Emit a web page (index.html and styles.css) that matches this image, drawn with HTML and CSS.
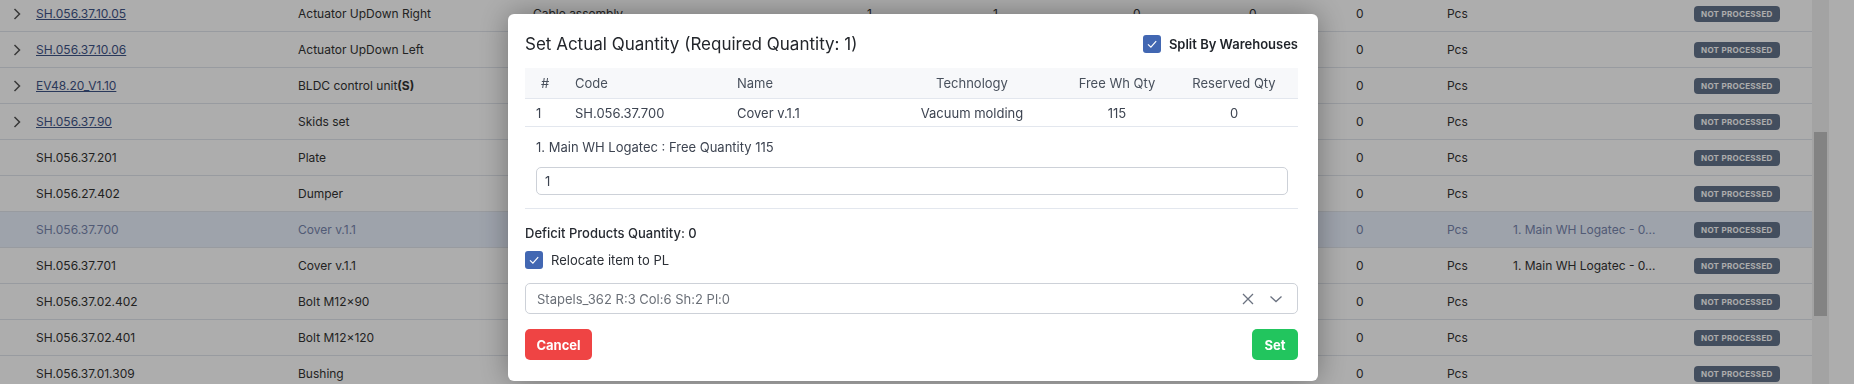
FILE: index.html
```html
<!DOCTYPE html>
<html lang="en">

<head>
    <meta charset="UTF-8">
    <meta name="viewport" content="width=device-width, initial-scale=1.0">
    <title>Production Items</title>
    <link rel="stylesheet" href="styles.css">
</head>

<body>

    <div class="page">
        <div class="grid">
            <div class="row">
                <span class="toggle"><svg width="8" height="12" viewBox="0 0 8 12"><path d="M1.5 1 L6.5 6 L1.5 11" /></svg></span>
                <span><a class="code" href="#">SH.056.37.10.05</a></span>
                <span>Actuator UpDown Right</span>
                <span>Cable assembly</span>
                <span>1</span><span>1</span><span>0</span><span>0</span><span>0</span>
                <span>Pcs</span><span></span>
                <span><i class="badge">NOT PROCESSED</i></span>
            </div>
            <!-- колонки под модалкой не заполнены -->
            <div class="row">
                <span class="toggle"><svg width="8" height="12" viewBox="0 0 8 12"><path d="M1.5 1 L6.5 6 L1.5 11" /></svg></span>
                <span><a class="code" href="#">SH.056.37.10.06</a></span>
                <span>Actuator UpDown Left</span>
                <span></span><span></span><span></span><span></span><span></span>
                <span>0</span><span>Pcs</span><span></span>
                <span><i class="badge">NOT PROCESSED</i></span>
            </div>
            <div class="row">
                <span class="toggle"><svg width="8" height="12" viewBox="0 0 8 12"><path d="M1.5 1 L6.5 6 L1.5 11" /></svg></span>
                <span><a class="code" href="#">EV48.20_V1.10</a></span>
                <span>BLDC control unit<b>(S)</b></span>
                <span></span><span></span><span></span><span></span><span></span>
                <span>0</span><span>Pcs</span><span></span>
                <span><i class="badge">NOT PROCESSED</i></span>
            </div>
            <div class="row">
                <span class="toggle"><svg width="8" height="12" viewBox="0 0 8 12"><path d="M1.5 1 L6.5 6 L1.5 11" /></svg></span>
                <span><a class="code" href="#">SH.056.37.90</a></span>
                <span>Skids set</span>
                <span></span><span></span><span></span><span></span><span></span>
                <span>0</span><span>Pcs</span><span></span>
                <span><i class="badge">NOT PROCESSED</i></span>
            </div>
            <div class="row">
                <span class="toggle"></span>
                <span>SH.056.37.201</span>
                <span>Plate</span>
                <span></span><span></span><span></span><span></span><span></span>
                <span>0</span><span>Pcs</span><span></span>
                <span><i class="badge">NOT PROCESSED</i></span>
            </div>
            <div class="row">
                <span class="toggle"></span>
                <span>SH.056.27.402</span>
                <span>Dumper</span>
                <span></span><span></span><span></span><span></span><span></span>
                <span>0</span><span>Pcs</span><span></span>
                <span><i class="badge">NOT PROCESSED</i></span>
            </div>
            <!-- выбранная строка -->
            <div class="row selected">
                <span class="toggle"></span>
                <span>SH.056.37.700</span>
                <span>Cover v.1.1</span>
                <span></span><span></span><span></span><span></span><span></span>
                <span>0</span><span>Pcs</span><span>1. Main WH Logatec - 0...</span>
                <span><i class="badge">NOT PROCESSED</i></span>
            </div>
            <div class="row">
                <span class="toggle"></span>
                <span>SH.056.37.701</span>
                <span>Cover v.1.1</span>
                <span></span><span></span><span></span><span></span><span></span>
                <span>0</span><span>Pcs</span><span>1. Main WH Logatec - 0...</span>
                <span><i class="badge">NOT PROCESSED</i></span>
            </div>
            <div class="row">
                <span class="toggle"></span>
                <span>SH.056.37.02.402</span>
                <span>Bolt M12×90</span>
                <span></span><span></span><span></span><span></span><span></span>
                <span>0</span><span>Pcs</span><span></span>
                <span><i class="badge">NOT PROCESSED</i></span>
            </div>
            <div class="row">
                <span class="toggle"></span>
                <span>SH.056.37.02.401</span>
                <span>Bolt M12×120</span>
                <span></span><span></span><span></span><span></span><span></span>
                <span>0</span><span>Pcs</span><span></span>
                <span><i class="badge">NOT PROCESSED</i></span>
            </div>
            <div class="row">
                <span class="toggle"></span>
                <span>SH.056.37.01.309</span>
                <span>Bushing</span>
                <span></span><span></span><span></span><span></span><span></span>
                <span>0</span><span>Pcs</span><span></span>
                <span><i class="badge">NOT PROCESSED</i></span>
            </div>
        </div>

        <div class="scrollbar">
            <div class="thumb"></div>
        </div>
    </div>

    <div class="backdrop"></div>

    <!-- Модалка -->
    <div class="modal">
        <div class="modal-head">
            <h2>Set Actual Quantity (Required Quantity: 1)</h2>
            <label class="check bold">
                <span class="box"><svg width="18" height="18" viewBox="0 0 18 18"><path d="M5 9.3 L7.9 12.2 L13.2 6.2" /></svg></span>
                Split By Warehouses
            </label>
        </div>

        <div class="items">
            <div class="items-head">
                <span class="c-num">#</span>
                <span>Code</span>
                <span>Name</span>
                <span class="c-mid">Technology</span>
                <span class="c-mid">Free Wh Qty</span>
                <span class="c-mid">Reserved Qty</span>
            </div>
            <div class="items-row">
                <span>1</span>
                <span>SH.056.37.700</span>
                <span>Cover v.1.1</span>
                <span class="c-mid">Vacuum molding</span>
                <span class="c-mid">115</span>
                <span class="c-mid">0</span>
            </div>
        </div>

        <div class="warehouse">
            <p>1. Main WH Logatec : Free Quantity 115</p>
            <input type="text" value="1">
        </div>

        <p class="deficit">Deficit Products Quantity: 0</p>

        <label class="check relocate">
            <span class="box"><svg width="18" height="18" viewBox="0 0 18 18"><path d="M5 9.3 L7.9 12.2 L13.2 6.2" /></svg></span>
            Relocate item to PL
        </label>

        <div class="select">
            <span class="select-value">Stapels_362 R:3 Col:6 Sh:2 Pl:0</span>
            <svg class="ico" width="14" height="14" viewBox="0 0 14 14"><path d="M2 2 L12 12 M12 2 L2 12" /></svg>
            <svg class="ico" width="14" height="14" viewBox="0 0 14 14"><path d="M1.5 4.5 L7 9.5 L12.5 4.5" /></svg>
        </div>

        <div class="modal-foot">
            <button class="btn cancel">Cancel</button>
            <button class="btn ok">Set</button>
        </div>
    </div>

</body>

</html>
```

FILE: styles.css
```css
/* Базовые стили */
* {
    margin: 0;
    padding: 0;
    box-sizing: border-box;
}

body {
    font-family: "Inter", "Liberation Sans", sans-serif;
    font-size: 12px;
    color: #333;
    background: #fff;
    overflow: hidden;
    height: 384px;
}

.page {
    display: flex;
    padding-right: 25px;
}

.grid {
    width: 1812px;
    margin-top: -4px;
}

.row {
    display: grid;
    grid-template-columns: 36px 262px 235px 334px 126px 140px 116px 107px 91px 66px 181px 118px;
    align-items: center;
    height: 36px;
    border-bottom: 1px solid #e1e5ec;
    white-space: nowrap;
}

.row.selected {
    background: #e9f0fd;
    color: #7886ad;
}

.toggle {
    display: flex;
    justify-content: center;
    padding-right: 2px;
}

.toggle svg path {
    fill: none;
    stroke: #555;
    stroke-width: 1.5;
}

.code {
    color: #3f5486;
    text-decoration: underline;
}

b {
    font-weight: 700;
}

.badge {
    display: inline-block;
    font-style: normal;
    font-weight: 700;
    font-size: 8px;
    letter-spacing: 0.3px;
    line-height: 16px;
    height: 16px;
    padding: 0 7px;
    border-radius: 4px;
    background: #64748b;
    color: #fff;
}

.scrollbar {
    width: 17px;
    height: 384px;
    background: #f1f1f1;
    padding: 132px 2px 0;
}

.thumb {
    height: 184px;
    background: #c1c1c1;
}

.backdrop {
    position: fixed;
    inset: 0;
    background: rgba(0, 0, 0, 0.32);
}

/* Модальное окно */
.modal {
    position: fixed;
    left: 508px;
    top: 14px;
    width: 810px;
    padding: 18px 20px 21px 17px;
    background: #fff;
    border-radius: 6px;
    box-shadow: 0 0 30px rgba(0, 0, 0, 0.35);
    font-size: 13px;
    color: #3d4451;
}

.modal-head {
    display: flex;
    justify-content: space-between;
    align-items: center;
    height: 24px;
}

h2 {
    font-size: 17px;
    font-weight: 400;
    color: #23262b;
}

.check {
    display: flex;
    align-items: center;
    gap: 8px;
    color: #2b2f36;
}

.check.bold {
    font-weight: 600;
    color: #1f2329;
}

.box {
    width: 18px;
    height: 18px;
    border-radius: 3px;
    background: #4267b2;
}

.box svg path {
    fill: none;
    stroke: #fff;
    stroke-width: 1.2;
}

.items {
    margin-top: 12px;
}

.items-head,
.items-row {
    display: grid;
    grid-template-columns: 40px 162px 153px 184px 106px 128px;
    align-items: center;
    border-bottom: 1px solid #e3e7ee;
}

.items-head {
    height: 31px;
    background: #f7f8fa;
    color: #48505c;
}

.items-row {
    height: 28px;
}

.items-head span,
.items-row span {
    padding-left: 10px;
}

.items-row span:first-child {
    padding-left: 11px;
}

.items-head .c-num,
.c-mid {
    text-align: center;
    padding-left: 0 !important;
}

.warehouse {
    padding: 12px 10px 13px 11px;
    border-bottom: 1px solid #e3e7ee;
}

.warehouse p {
    line-height: 17px;
    margin-bottom: 11px;
}

.warehouse input {
    width: 100%;
    height: 28px;
    padding: 0 8px;
    border: 1px solid #cdd1d8;
    border-radius: 5px;
    font-family: inherit;
    font-size: 13px;
    color: #3d4451;
    outline: none;
}

.deficit {
    margin-top: 15px;
    line-height: 18px;
    font-weight: 500;
    color: #262a31;
}

.relocate {
    margin-top: 8px;
    height: 19px;
}

.select {
    display: flex;
    align-items: center;
    gap: 14px;
    margin-top: 14px;
    height: 31px;
    padding: 0 14px 0 11px;
    border: 1px solid #cdd1d8;
    border-radius: 5px;
}

.select-value {
    flex: 1;
    color: #6b7078;
}

.ico path {
    fill: none;
    stroke: #6b7280;
    stroke-width: 1.3;
}

.modal-foot {
    display: flex;
    justify-content: space-between;
    margin-top: 15px;
}

.btn {
    height: 31px;
    border: none;
    border-radius: 5px;
    font-family: inherit;
    font-size: 13px;
    font-weight: 700;
    color: #fff;
    cursor: pointer;
}

.cancel {
    width: 67px;
    background: #ef4444;
}

.ok {
    width: 46px;
    background: #22c55e;
}
```
